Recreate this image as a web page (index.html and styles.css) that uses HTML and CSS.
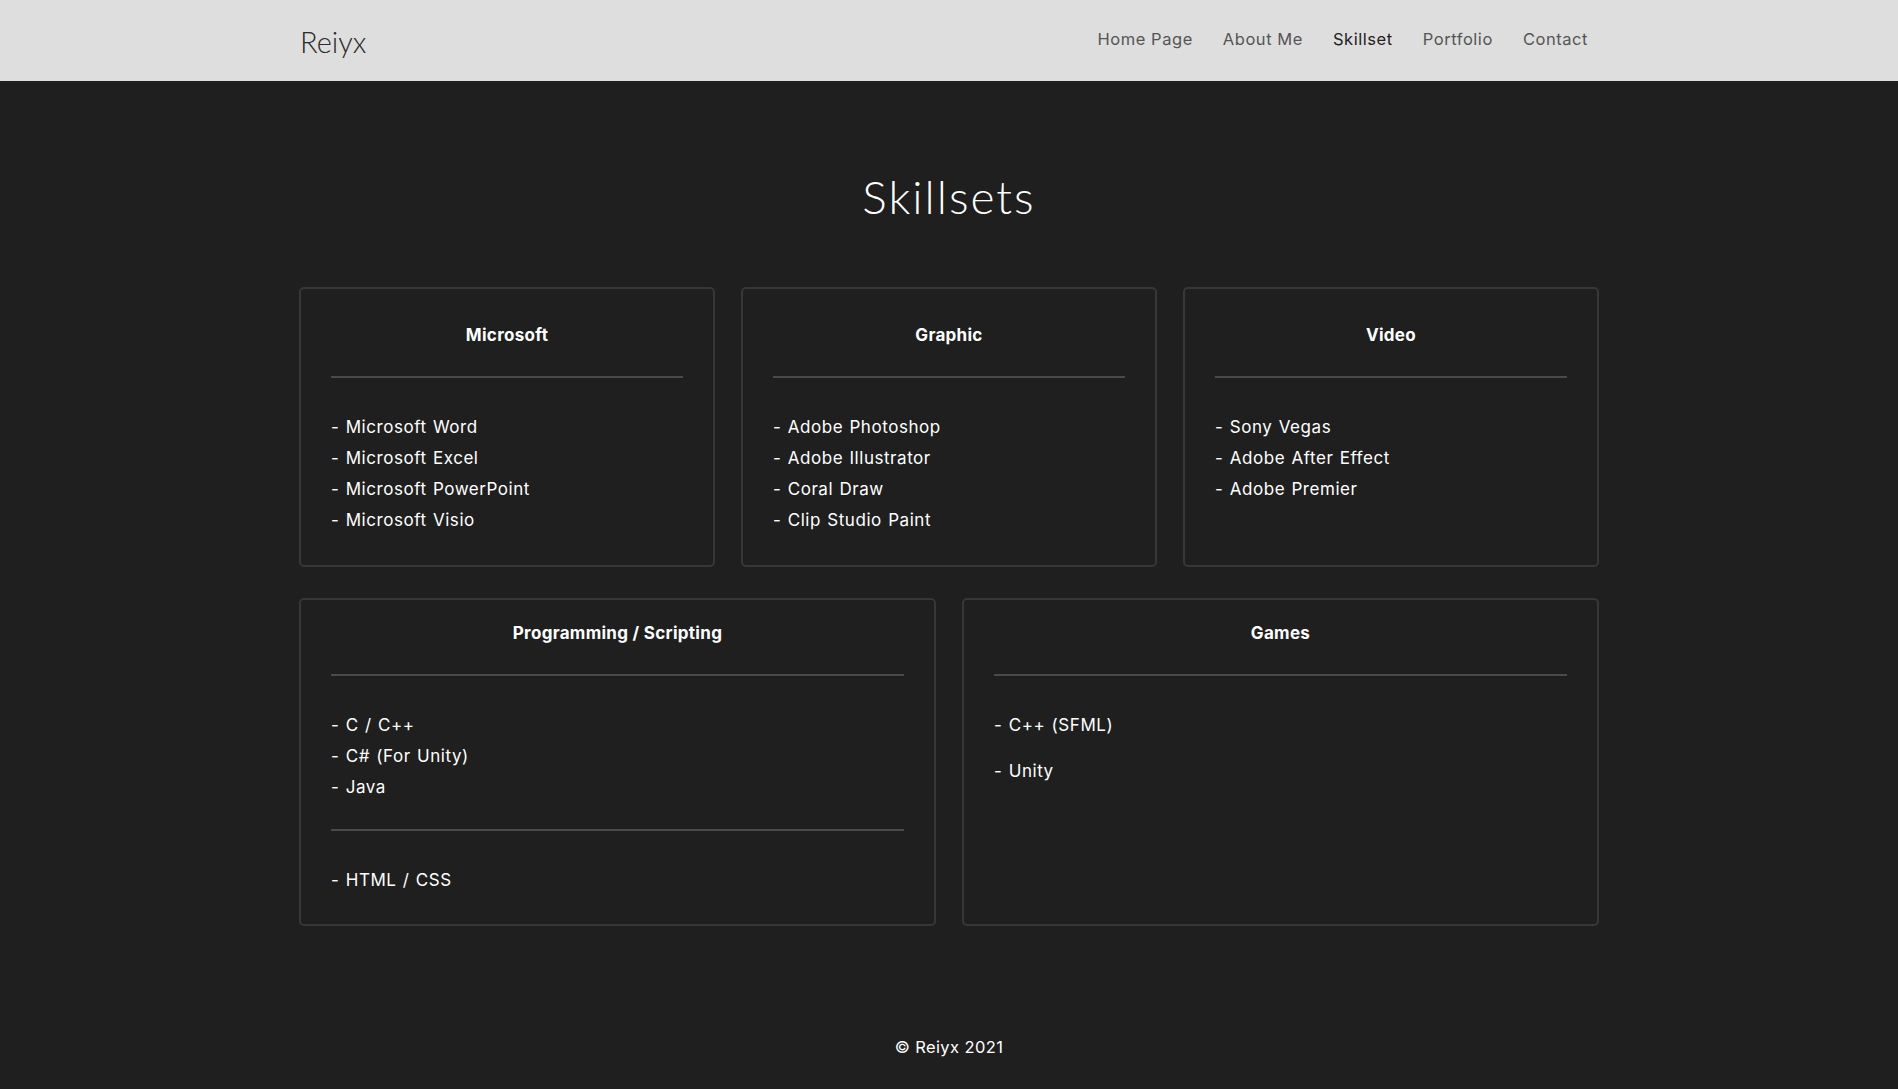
FILE: index.html
```html
<!DOCTYPE html>
<html lang="en">
<head>
<meta charset="utf-8">
<title>Reiyx - Skillset</title>
<link rel="stylesheet" href="styles.css">
</head>
<body>
<header class="site-header">
  <div class="container header-inner">
    <a class="logo" href="#">Reiyx</a>
    <nav class="nav">
      <a href="#">Home Page</a>
      <a href="#">About Me</a>
      <a href="#" class="active">Skillset</a>
      <a href="#">Portfolio</a>
      <a href="#">Contact</a>
    </nav>
  </div>
</header>

<main class="container">
  <h1 class="page-title">Skillsets</h1>

  <section class="grid grid-3">
    <div class="card card-tall">
      <h2 class="card-title">Microsoft</h2>
      <hr class="divider">
      <ul class="list">
        <li>- Microsoft Word</li>
        <li>- Microsoft Excel</li>
        <li>- Microsoft PowerPoint</li>
        <li>- Microsoft Visio</li>
      </ul>
    </div>
    <div class="card card-tall">
      <h2 class="card-title">Graphic</h2>
      <hr class="divider">
      <ul class="list">
        <li>- Adobe Photoshop</li>
        <li>- Adobe Illustrator</li>
        <li>- Coral Draw</li>
        <li>- Clip Studio Paint</li>
      </ul>
    </div>
    <div class="card card-tall">
      <h2 class="card-title">Video</h2>
      <hr class="divider">
      <ul class="list">
        <li>- Sony Vegas</li>
        <li>- Adobe After Effect</li>
        <li>- Adobe Premier</li>
      </ul>
    </div>
  </section>

  <section class="grid grid-2">
    <div class="card">
      <h2 class="card-title">Programming / Scripting</h2>
      <hr class="divider">
      <ul class="list">
        <li>- C / C++</li>
        <li>- C# (For Unity)</li>
        <li>- Java</li>
      </ul>
      <hr class="divider divider-mid">
      <ul class="list">
        <li>- HTML / CSS</li>
      </ul>
    </div>
    <div class="card">
      <h2 class="card-title">Games</h2>
      <hr class="divider">
      <ul class="list list-spaced">
        <li>- C++ (SFML)</li>
        <li>- Unity</li>
      </ul>
    </div>
  </section>
</main>

<footer class="site-footer">© Reiyx 2021</footer>
</body>
</html>
```

FILE: styles.css
```css
* { box-sizing: border-box; }

html, body {
  margin: 0;
  padding: 0;
}

body {
  background: #1f1f1f;
  color: #ffffff;
  font-family: "Inter", "Open Sans", sans-serif;
  min-height: 1089px;
}

.container {
  width: 1300px;
  margin: 0 auto;
}

.site-header {
  background: #dedede;
  height: 81px;
}

.header-inner {
  height: 81px;
  display: flex;
  align-items: center;
  justify-content: space-between;
}

.logo {
  font-family: "Lato", sans-serif;
  font-weight: 300;
  font-size: 29px;
  color: #2b2b2b;
  text-decoration: none;
  margin-left: 1px;
  margin-top: 2px;
}

.nav {
  display: flex;
  gap: 30px;
  margin-right: 11px;
  margin-top: -3px;
}

.nav a {
  font-size: 16.5px;
  color: #555555;
  text-decoration: none;
  letter-spacing: 0.55px;
}

.nav a.active {
  color: #222222;
}

.page-title {
  font-family: "Lato", sans-serif;
  font-weight: 300;
  font-size: 46px;
  line-height: 54px;
  letter-spacing: 2px;
  text-align: center;
  margin: 89px 0 63px;
  color: #ffffff;
}

.grid {
  display: grid;
  gap: 26px;
}

.grid-3 {
  grid-template-columns: repeat(3, 1fr);
  margin-bottom: 31px;
}

.grid-2 {
  grid-template-columns: repeat(2, 1fr);
}

.card {
  border: 2px solid #373737;
  border-radius: 5px;
  padding: 21px 30px 28px;
}

.card-tall {
  padding-top: 34px;
  padding-bottom: 29px;
}

.card-title {
  font-size: 17px;
  font-weight: 700;
  line-height: 24px;
  letter-spacing: 0.3px;
  text-align: center;
  margin: 0 0 29px;
}

.divider {
  border: 0;
  height: 2px;
  background: #4a4a4a;
  margin: 0 0 34px;
}

.divider-mid {
  margin-top: 26px;
}

.list {
  list-style: none;
  margin: 0;
  padding: 0;
}

.list li {
  font-size: 17px;
  line-height: 31px;
  letter-spacing: 0.55px;
  word-spacing: 1px;
}

.list-spaced li + li {
  margin-top: 15px;
}

.site-footer {
  text-align: center;
  font-size: 16.5px;
  line-height: 24px;
  letter-spacing: 0.4px;
  margin-top: 109px;
  padding-bottom: 29px;
  color: #ffffff;
}
```
